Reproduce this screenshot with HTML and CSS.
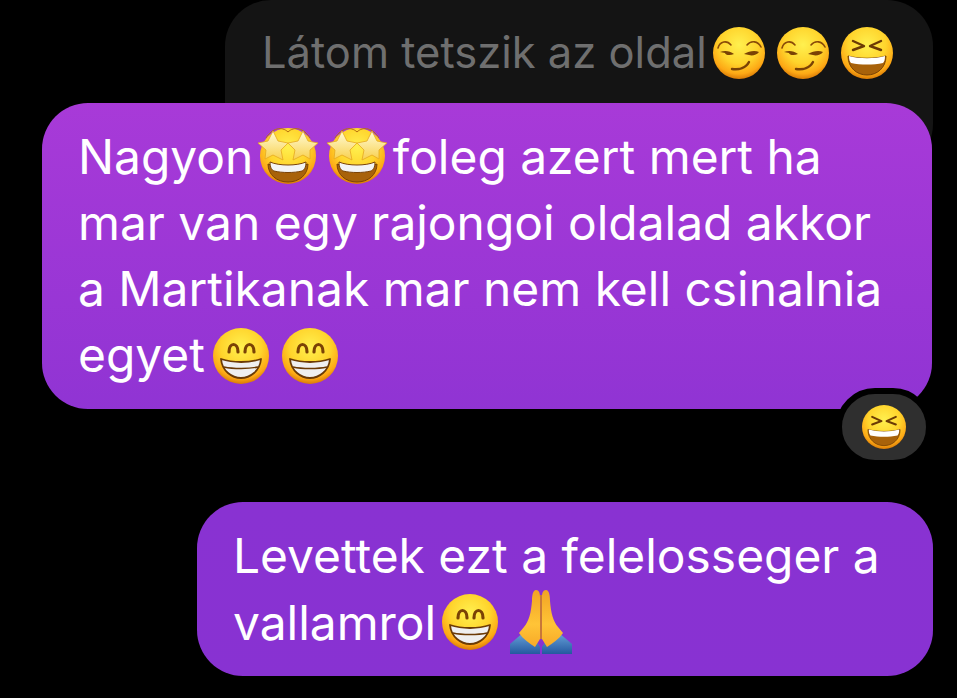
FILE: index.html
```html
<!DOCTYPE html>
<html lang="en">
<head>
    <meta charset="UTF-8">
    <meta name="viewport" content="width=device-width, initial-scale=1.0">
    <title>Chat</title>
    <link rel="stylesheet" href="styles.css">
</head>
<body>
    <svg class="defs" width="0" height="0">
        <defs>
            <radialGradient id="face" cx="50%" cy="34%" r="66%">
                <stop offset="0" stop-color="#fff04f"/>
                <stop offset="0.55" stop-color="#ffd42c"/>
                <stop offset="0.85" stop-color="#fda815"/>
                <stop offset="1" stop-color="#d97a06"/>
            </radialGradient>
            <linearGradient id="star" x1="0" y1="0" x2="0" y2="1">
                <stop offset="0" stop-color="#fffcd8"/>
                <stop offset="1" stop-color="#f8d04e"/>
            </linearGradient>
            <linearGradient id="hand" x1="0" y1="0" x2="0" y2="1">
                <stop offset="0" stop-color="#f2a324"/>
                <stop offset="0.6" stop-color="#ffc437"/>
                <stop offset="1" stop-color="#f7a928"/>
            </linearGradient>
            <linearGradient id="sleeve" x1="0" y1="0" x2="0" y2="1">
                <stop offset="0" stop-color="#6aa6dc"/>
                <stop offset="1" stop-color="#24589f"/>
            </linearGradient>
            <symbol id="smirk" viewBox="0 0 52 52">
                <circle cx="26" cy="26" r="26" fill="url(#face)"/>
                <path d="M5 21C7 14 14 13 18 18M34 18C38 13 45 14 48 20" fill="none" stroke="#8a4b08" stroke-width="1.6" stroke-linecap="round"/>
                <path d="M7 25C12 23 17 24 21 27C17 29 12 28 12 26ZM31 27C36 24 42 23 46 25C44 28 39 29 36 28Z" fill="#7a4205"/>
                <path d="M19 42C26 43 33 41 36 35" fill="none" stroke="#7a4205" stroke-width="2.4" stroke-linecap="round"/>
            </symbol>
            <symbol id="squint" viewBox="0 0 52 52">
                <circle cx="26" cy="26" r="26" fill="url(#face)"/>
                <path d="M12 14L23 19L12 23M40 14L29 19L40 23" fill="none" stroke="#6b3a05" stroke-width="2.4" stroke-linecap="round" stroke-linejoin="round"/>
                <path d="M7 29C18 32 34 32 45 29C45 41 36 48 26 48C16 48 7 41 7 29Z" fill="#a8620a" stroke="#7a4205" stroke-width="1"/>
                <path d="M8 29C18 32 34 32 44 29C44 33 43 35 42 36C32 38 20 38 10 36C9 35 8 33 8 29Z" fill="#fff"/>
            </symbol>
            <symbol id="star-struck" viewBox="0 0 60 58">
                <circle cx="30" cy="30" r="28" fill="url(#face)"/>
                <path d="M8 12C14 2 24 0 30 6C36 0 46 2 52 12" fill="none" stroke="#b8700e" stroke-width="1"/>
                <path d="M10 38C19 42 41 42 50 38C50 49 41 56 30 56C19 56 10 49 10 38Z" fill="#a8620a" stroke="#7a4205" stroke-width="1"/>
                <path d="M12 36C21 40 39 40 48 36C48 42 46 44 44 45C36 47 24 47 16 45C14 44 12 42 12 36Z" fill="#f4f4f4" stroke="#7a4205" stroke-width="1"/>
                <path d="M15 5L20 15L30 17L23 24L25 34L15 29L7 33L8 24L0 17L10 15Z" fill="url(#star)" stroke="#e6a820" stroke-width="0.8" stroke-linejoin="round"/>
                <path d="M45 5L50 15L60 17L52 24L52 33L45 29L35 34L37 24L30 17L40 15Z" fill="url(#star)" stroke="#e6a820" stroke-width="0.8" stroke-linejoin="round"/>
            </symbol>
            <symbol id="grin" viewBox="0 0 56 56">
                <circle cx="28" cy="28" r="28" fill="url(#face)"/>
                <path d="M16 24C16 14 25 14 25 24M32 24C32 14 41 14 41 24" fill="none" stroke="#7a4205" stroke-width="3.2" stroke-linecap="round"/>
                <path d="M8 31C20 35 36 35 48 31C47 43 37 50 28 50C19 50 9 43 8 31Z" fill="#efefef" stroke="#6b3a05" stroke-width="1.8" stroke-linejoin="round"/>
                <path d="M11 39C20 41 36 41 45 39" fill="none" stroke="#6b3a05" stroke-width="1.4"/>
            </symbol>
            <symbol id="pray" viewBox="0 0 64 66">
                <path d="M1 65V55L15 43L23 46L31 58V65Z" fill="url(#sleeve)"/>
                <path d="M63 65V55L49 43L41 46L33 58V65Z" fill="url(#sleeve)"/>
                <path d="M27 1C24 1 23 6 23 12C22 24 20 32 15 38L10 44C14 50 20 54 26 58L31 50V8C31 4 30 1 27 1Z" fill="url(#hand)"/>
                <path d="M37 1C40 1 41 6 41 12C42 24 44 32 49 38L54 44C50 50 44 54 38 58L33 50V8C33 4 34 1 37 1Z" fill="url(#hand)"/>
                <path d="M32 6V50" stroke="#d98a12" stroke-width="1.6"/>
            </symbol>
        </defs>
    </svg>

    <div class="chat">
        <div class="bubble replied">Látom tetszik az oldal<svg class="emoji small"><use href="#smirk"/></svg> <svg class="emoji small"><use href="#smirk"/></svg> <svg class="emoji small"><use href="#squint"/></svg></div>

        <div class="bubble mine first">
            Nagyon<svg class="emoji star"><use href="#star-struck"/></svg> <svg class="emoji star"><use href="#star-struck"/></svg>foleg azert mert ha<br>
            mar van egy rajongoi oldalad akkor<br>
            a Martikanak mar nem kell csinalnia<br>
            egyet<svg class="emoji"><use href="#grin"/></svg> <svg class="emoji"><use href="#grin"/></svg>
            <div class="reaction"><svg class="reaction-emoji"><use href="#squint"/></svg></div>
        </div>

        <div class="bubble mine last">
            Levettek ezt a felelosseger a<br>
            vallamrol<svg class="emoji"><use href="#grin"/></svg> <svg class="emoji pray"><use href="#pray"/></svg>
        </div>
    </div>
</body>
</html>
```

FILE: styles.css
```css
html, body {
    margin: 0;
    height: 100%;
    background: #000;
    overflow: hidden;
}
.defs {
    position: absolute;
}
.chat {
    display: flex;
    flex-direction: column;
    align-items: flex-end;
    padding-right: 24px;
    font-family: 'Inter', 'Roboto', sans-serif;
    font-size: 47.9px;
    line-height: 66px;
}
.bubble {
    box-sizing: border-box;
    border-radius: 46px;
}
.replied {
    width: 708px;
    height: 170px;
    padding: 19px 37px 0;
    background: #141414;
    color: #6f6f6f;
    font-size: 43.5px;
    white-space: nowrap;
}
.mine {
    color: #fff;
    background: linear-gradient(180deg, #a83ad8 100px, #8932d2 500px, #8832d2 698px) fixed;
}
.first {
    position: relative;
    width: 890px;
    height: 306px;
    margin: -67px 1px 0 0;
    padding: 21px 36px 0;
}
.last {
    width: 736px;
    height: 174px;
    margin-top: 93px;
    padding: 21px 36px 0;
}
.emoji {
    width: 56px;
    height: 56px;
    margin: 0 -1px 0 8px;
    vertical-align: -12px;
}
.emoji + .emoji {
    margin-left: 1px;
}
.last .emoji {
    margin-left: 6px;
    vertical-align: -10px;
}
.emoji.small {
    width: 52px;
    height: 52px;
    margin: 0 0 0 6px;
    vertical-align: -11px;
}
.emoji.small + .emoji.small {
    margin-left: 0;
}
.emoji.star {
    width: 60px;
    height: 58px;
    margin: 0 0 0 5px;
    vertical-align: -10px;
}
.emoji.star + .emoji.star {
    margin: 0 6px 0 -5px;
}
.last .emoji.pray {
    width: 64px;
    height: 66px;
    margin-left: -2px;
    vertical-align: -15px;
}
.reaction {
    position: absolute;
    right: 0;
    bottom: -57px;
    display: flex;
    align-items: center;
    justify-content: center;
    width: 84px;
    height: 66px;
    border: 6px solid #000;
    border-radius: 39px;
    background: #2f2f2f;
}
.reaction-emoji {
    width: 44px;
    height: 46px;
}
```
